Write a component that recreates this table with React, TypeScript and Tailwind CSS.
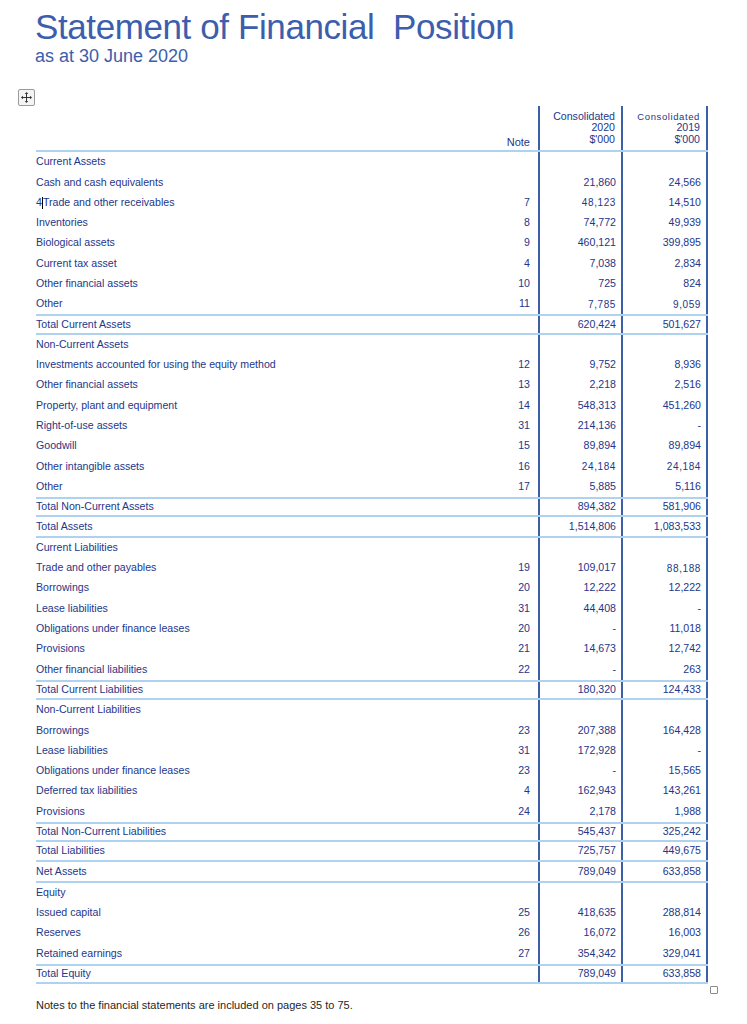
import React from "react"

type Row = {
  label: string
  note?: string
  a?: string
  b?: string
  section?: boolean
  top?: boolean
  bottom?: boolean
  cursor?: boolean
  wa?: boolean
  wb?: boolean
}

const rows: Row[] = [
  { label: "Current Assets", section: true },
  { label: "Cash and cash equivalents", a: "21,860", b: "24,566" },
  { label: "Trade and other receivables", cursor: true, note: "7", a: "48,123", b: "14,510", wa: true },
  { label: "Inventories", note: "8", a: "74,772", b: "49,939" },
  { label: "Biological assets", note: "9", a: "460,121", b: "399,895" },
  { label: "Current tax asset", note: "4", a: "7,038", b: "2,834" },
  { label: "Other financial assets", note: "10", a: "725", b: "824" },
  { label: "Other", note: "11", a: "7,785", b: "9,059", wa: true, wb: true },
  { label: "Total Current Assets", a: "620,424", b: "501,627", top: true, bottom: true },
  { label: "Non-Current Assets", section: true },
  { label: "Investments accounted for using the equity method", note: "12", a: "9,752", b: "8,936" },
  { label: "Other financial assets", note: "13", a: "2,218", b: "2,516" },
  { label: "Property, plant and equipment", note: "14", a: "548,313", b: "451,260" },
  { label: "Right-of-use assets", note: "31", a: "214,136", b: "-" },
  { label: "Goodwill", note: "15", a: "89,894", b: "89,894" },
  { label: "Other intangible assets", note: "16", a: "24,184", b: "24,184", wa: true, wb: true },
  { label: "Other", note: "17", a: "5,885", b: "5,116" },
  { label: "Total Non-Current Assets", a: "894,382", b: "581,906", top: true, bottom: true },
  { label: "Total Assets", a: "1,514,806", b: "1,083,533", bottom: true },
  { label: "Current Liabilities", section: true },
  { label: "Trade and other payables", note: "19", a: "109,017", b: "88,188", wb: true },
  { label: "Borrowings", note: "20", a: "12,222", b: "12,222" },
  { label: "Lease liabilities", note: "31", a: "44,408", b: "-" },
  { label: "Obligations under finance leases", note: "20", a: "-", b: "11,018" },
  { label: "Provisions", note: "21", a: "14,673", b: "12,742" },
  { label: "Other financial liabilities", note: "22", a: "-", b: "263" },
  { label: "Total Current Liabilities", a: "180,320", b: "124,433", top: true, bottom: true },
  { label: "Non-Current Liabilities", section: true },
  { label: "Borrowings", note: "23", a: "207,388", b: "164,428" },
  { label: "Lease liabilities", note: "31", a: "172,928", b: "-" },
  { label: "Obligations under finance leases", note: "23", a: "-", b: "15,565" },
  { label: "Deferred tax liabilities", note: "4", a: "162,943", b: "143,261" },
  { label: "Provisions", note: "24", a: "2,178", b: "1,988" },
  { label: "Total Non-Current Liabilities", a: "545,437", b: "325,242", top: true, bottom: true },
  { label: "Total Liabilities", a: "725,757", b: "449,675", bottom: true },
  { label: "Net Assets", a: "789,049", b: "633,858", bottom: true },
  { label: "Equity", section: true },
  { label: "Issued capital", note: "25", a: "418,635", b: "288,814" },
  { label: "Reserves", note: "26", a: "16,072", b: "16,003" },
  { label: "Retained earnings", note: "27", a: "354,342", b: "329,041" },
  { label: "Total Equity", a: "789,049", b: "633,858", top: true, bottom: true },
]

function MoveHandle() {
  return (
    <div className="ml-[18px] w-[17px] h-[17px] border border-[#9a9a9a] bg-[#f4f4f4] rounded-[2px] flex items-center justify-center">
      <svg width="11" height="11" viewBox="0 0 11 11" fill="#333">
        <rect x="5" y="1.5" width="1" height="8" />
        <rect x="1.5" y="5" width="8" height="1" />
        <path d="M5.5 0 L7.2 2 L3.8 2 Z" />
        <path d="M5.5 11 L7.2 9 L3.8 9 Z" />
        <path d="M0 5.5 L2 3.8 L2 7.2 Z" />
        <path d="M11 5.5 L9 3.8 L9 7.2 Z" />
      </svg>
    </div>
  )
}

function TableRow({ row }: { row: Row }) {
  const lines =
    (row.top ? "border-t-2 " : "") + (row.bottom ? "border-b-2 " : "")
  return (
    <div
      className={
        "grid grid-cols-[454px_48px_85px_85px] h-[20.3px] border-[#aed2f0] text-[10.6px] text-[#24368a] " +
        lines
      }
    >
      <div className="flex items-center">
        {row.cursor && (
          <>
            <span>4</span>
            <span className="inline-block w-px h-[12px] bg-black" />
          </>
        )}
        <span>{row.label}</span>
      </div>
      <div className="flex items-center justify-end pr-[8px]">{row.note}</div>
      <div className="flex items-center justify-end pr-[5px] border-x-2 border-[#3d5fa6]">
        <span className={row.wa ? "tracking-[0.6px] text-[10px]" : ""}>{row.a}</span>
      </div>
      <div className="flex items-center justify-end pr-[5px] border-r-2 border-[#3d5fa6]">
        <span className={row.wb ? "tracking-[0.6px] text-[10px]" : ""}>{row.b}</span>
      </div>
    </div>
  )
}

export default function App() {
  return (
    <div className="w-[747px] h-[1024px] bg-white overflow-hidden font-['Liberation_Sans',Arial,sans-serif]">
      <div className="pl-[35px] pt-[8px]">
        <h1 className="text-[35px] leading-[38px] tracking-[-0.4px] text-[#3c5eac]">
          Statement of Financial&nbsp; Position
        </h1>
        <p className="text-[18px] leading-[20px] text-[#3c5eac]">as at 30 June 2020</p>
      </div>

      <div className="mt-[23px]">
        <MoveHandle />
      </div>

      <div className="relative ml-[36px] w-[672px]">
        <div className="grid grid-cols-[454px_48px_85px_85px] h-[46px] border-b-2 border-[#aed2f0] text-[10.6px] leading-[11.5px] text-[#24368a]">
          <div />
          <div className="flex items-end justify-end pr-[8px] pb-[2px] text-[11px]">Note</div>
          <div className="flex flex-col items-end justify-end pr-[6px] pb-[5px] border-x-2 border-[#3d5fa6] text-right">
            <span>Consolidated</span>
            <span>2020</span>
            <span>$'000</span>
          </div>
          <div className="flex flex-col items-end justify-end pr-[6px] pb-[5px] border-r-2 border-[#3d5fa6] text-right">
            <span className="text-[9.5px] tracking-[0.6px]">Consolidated</span>
            <span>2019</span>
            <span>$'000</span>
          </div>
        </div>
        {rows.map((row, i) => (
          <TableRow key={i} row={row} />
        ))}
        <div className="absolute right-[-10px] bottom-[-10px] w-[8px] h-[8px] border border-[#8a8a8a] rounded-[1px] bg-white" />
      </div>

      <p className="ml-[36px] mt-[13px] text-[11px] text-[#1f1f1f]">
        Notes to the financial statements are included on pages 35 to 75.
      </p>
    </div>
  )
}
